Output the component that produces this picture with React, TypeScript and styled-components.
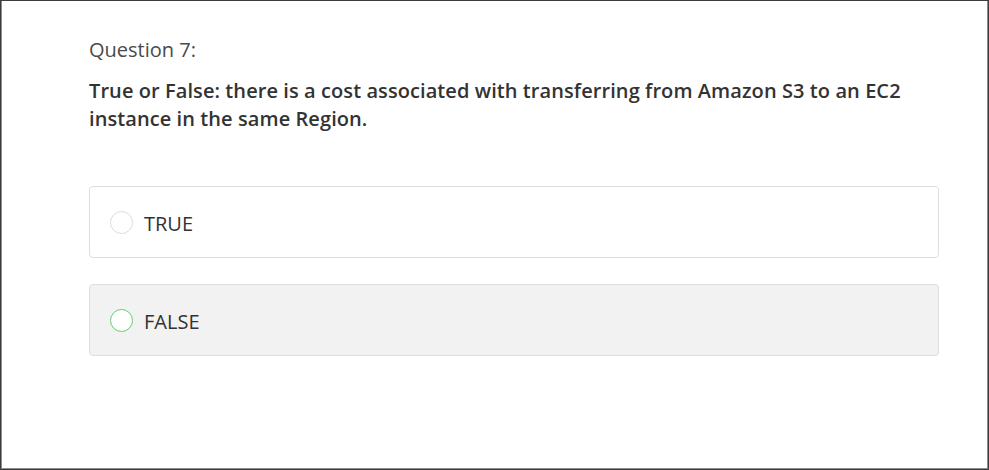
import React, { useState } from "react";
import styled, { createGlobalStyle } from "styled-components";

const Global = createGlobalStyle`
  html, body { margin: 0; padding: 0; background: #ffffff; }
  * { box-sizing: border-box; }
`;

const Frame = styled.div`
  width: 989px;
  height: 470px;
  border: 1px solid #3c3c3c;
  box-shadow: inset 1px 0 0 #8c8c8c, inset -1px -1px 0 #8c8c8c;
  padding: 35px 49px 0 88px;
  font-family: "Open Sans", "Liberation Sans", sans-serif;
  color: #333333;
  background: #ffffff;
`;

const Label = styled.div`
  font-size: 20px;
  line-height: 28px;
  color: #4a4a4a;
  font-weight: 400;
`;

const Prompt = styled.div`
  margin-top: 13px;
  font-size: 20px;
  line-height: 28px;
  font-weight: 600;
  letter-spacing: 0.08px;
  color: #333333;
`;

const Options = styled.div`
  margin-top: 53px;
  display: flex;
  flex-direction: column;
  gap: 26px;
`;

const Option = styled.label<{ $hover?: boolean }>`
  display: flex;
  align-items: center;
  gap: 11px;
  height: 72px;
  padding: 0 20px;
  border: 1px solid #dedede;
  border-radius: 4px;
  background: ${(p) => (p.$hover ? "#f2f2f2" : "#ffffff")};
  cursor: pointer;
`;

const Radio = styled.span<{ $active?: boolean }>`
  width: 23px;
  height: 23px;
  border-radius: 50%;
  border: 1px solid ${(p) => (p.$active ? "#6cc873" : "#dcdcdc")};
  background: #ffffff;
  flex: none;
`;

const OptionText = styled.span`
  font-size: 20px;
  color: #333333;
  line-height: 28px;
  margin-top: 4px;
`;

export default function App() {
  const [hover] = useState(1);
  const options = ["TRUE", "FALSE"];
  return (
    <>
      <Global />
      <Frame>
        <Label>Question 7:</Label>
        <Prompt>
          True or False: there is a cost associated with transferring from Amazon S3 to an EC2
          <br />
          instance in the same Region.
        </Prompt>
        <Options>
          {options.map((o, i) => (
            <Option key={o} $hover={i === hover}>
              <Radio $active={i === hover} />
              <OptionText>{o}</OptionText>
            </Option>
          ))}
        </Options>
      </Frame>
    </>
  );
}
